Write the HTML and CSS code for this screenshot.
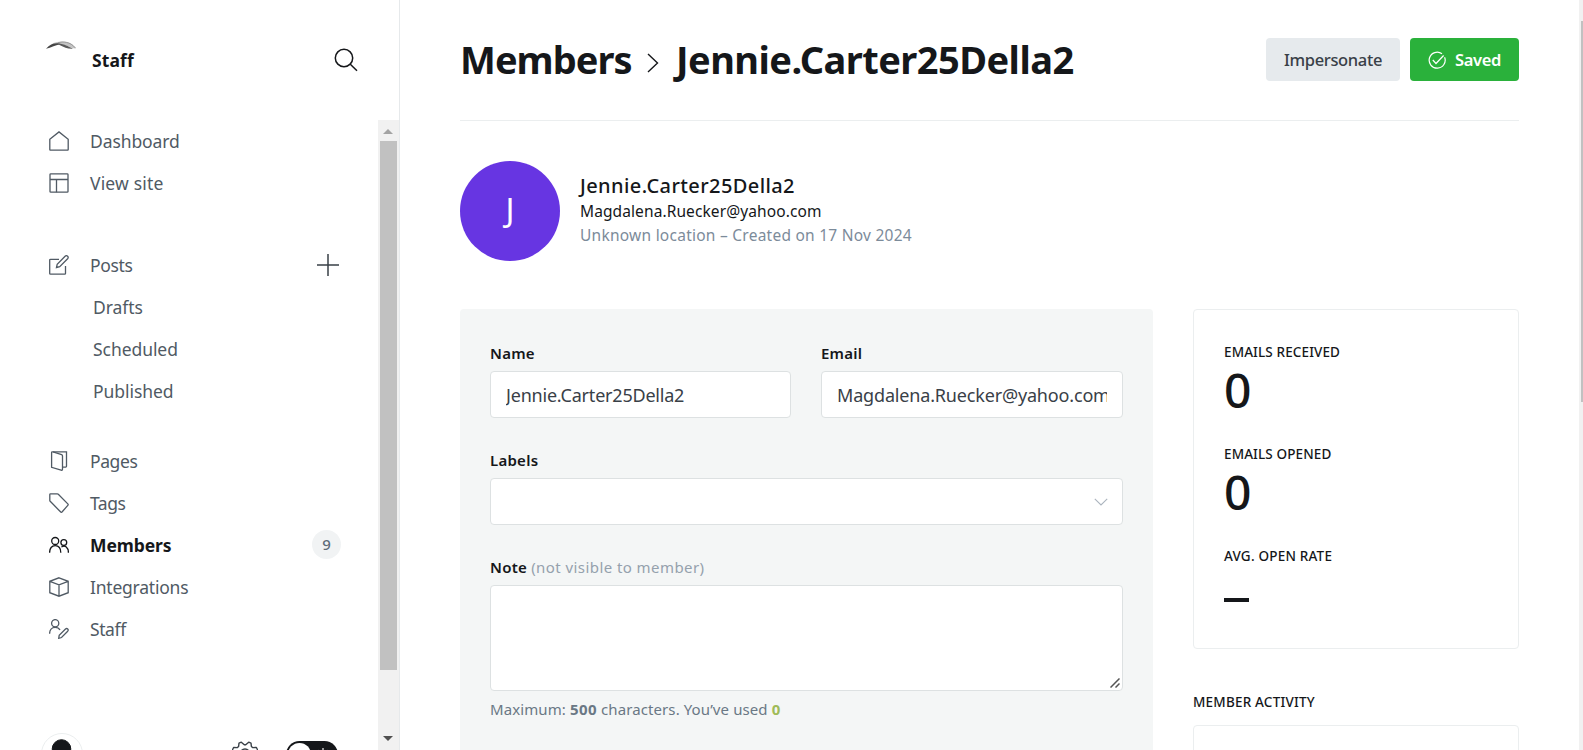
FILE: index.html
```
<!DOCTYPE html>
<html lang="en">
<head>
<meta charset="utf-8">
<title>Members - Jennie.Carter25Della2</title>
<link rel="stylesheet" href="styles.css">
</head>
<body>
<div class="app">
  <aside class="sidebar">
    <header class="side-head">
      <svg class="site-logo" viewBox="0 0 30 8"><path d="M6 2.600C11 .4 17 0 22 1.200c4 1.200 6 3.200 8 6.400-4-.3-7-1.400-10-3-4-1.800-8-2.400-14-2z" fill="#c4c4c4"/><path d="M0 7.800C5 2.200 10 1.200 15 3.200 10 3.600 5 6.800 0 7.800z" fill="#454545"/><path d="M11 2.200c7 .3 11 3.200 16 5.500-5 .4-9-1.400-13-3.500-1-.7-2-1.100-3-1.100z" fill="#5a5a5a"/><path d="M12 1.800C17 .2 24 .6 29.500 7" fill="none" stroke="#8d8d8d" stroke-width=".8"/></svg>
      <span class="site-name">Staff</span>
      <svg class="search" viewBox="0 0 24 24"><circle cx="10" cy="10" r="8.700"/><path d="M16.300 16.300 23 22.800"/></svg>
    </header>
    <div class="side-body">
      <nav class="nav">
        <a class="item"><svg class="ico" viewBox="0 0 20 20"><path d="M.8 8.200 10 .9l9.200 7.300v10.300a.7.7 0 0 1-.7.700h-17a.7.7 0 0 1-.7-.7z"/></svg><span class="t">Dashboard</span></a>
        <a class="item"><svg class="ico" viewBox="0 0 20 20"><rect x="1" y=".8" width="18" height="18.400" rx=".8"/><path d="M1 6.500h18M7.500 6.500v12.700"/></svg><span class="t wide">View site</span></a>
        <a class="item gap-a"><svg class="ico" viewBox="0 0 20 20"><path d="M10 4.300H1.500a.8.8 0 0 0-.8.800v13.300c0 .4.400.8.800.8h14.200c.4 0 .8-.4.800-.8V11"/><path d="m7.500 12.500.7-3.300 7.900-7.900c.8-.8 1.800-.7 2.500-.1.700.7.700 1.700 0 2.500l-7.900 7.900z"/></svg><span class="t tight">Posts</span><svg class="plus" viewBox="0 0 22 22"><path d="M11 0v22M0 11h22"/></svg></a>
        <a class="item sub"><span class="t">Drafts</span></a>
        <a class="item sub"><span class="t">Scheduled</span></a>
        <a class="item sub"><span class="t">Published</span></a>
        <a class="item gap-b"><svg class="ico" viewBox="0 0 20 20"><path d="M2.600 1.500v14.800l9.500 2.900c.8.2 1.400-.2 1.400-.9V4.900c0-.6-.3-1-.9-1.200L4 .9C3.200.7 2.600.9 2.600 1.500z"/><path d="M4 .8h13.500v14.500c0 .5-.3.800-.8.800h-3.200"/></svg><span class="t snug">Pages</span></a>
        <a class="item"><svg class="ico" viewBox="0 0 20 20"><path d="M.8 1.500c0-.4.300-.7.700-.7h6.800c.4 0 .7.100 1 .4l9.500 9.700c.5.500.5 1 0 1.500L13 19c-.4.400-.9.400-1.300 0L1.200 8.300c-.3-.3-.4-.5-.4-.9z"/></svg><span class="t snugger">Tags</span></a>
        <a class="item active"><svg class="ico" viewBox="0 0 20 20"><circle cx="6.200" cy="6" r="3.500"/><path d="M.6 17.800c0-4.600 2.100-7.200 5.600-7.200s5.600 2.600 5.600 7.200"/><circle cx="14.800" cy="7.600" r="2.900"/><path d="M12.400 12c3.700-2.300 7 .2 7 5.800"/></svg><span class="t">Members</span><span class="count">9</span></a>
        <a class="item"><svg class="ico" viewBox="0 0 20 20"><path d="m10 .8 9.200 3.500v11.400L10 19.200.8 15.700V4.300zM.8 4.300 10 7.900l9.200-3.600M10 7.900v11.300"/></svg><span class="t close">Integrations</span></a>
        <a class="item"><svg class="ico" viewBox="0 0 20 20"><circle cx="6.200" cy="4.200" r="3.600"/><path d="M.6 14.800C.6 10.900 2.700 8.300 6.200 8.300c2.200 0 3.900 1 4.800 2.700"/><path d="m9.700 19.300.5-3 6.300-6.300c.7-.6 1.600-.6 2.200 0 .6.600.6 1.500 0 2.200l-6.200 6.300z"/></svg><span class="t snug">Staff</span></a>
      </nav>
      <div class="vscroll"><i class="arrow up"></i><i class="thumb"></i><i class="arrow down"></i></div>
    </div>
    <footer class="side-foot">
      <span class="user"><svg viewBox="0 0 42 42"><circle cx="21" cy="21" r="20.500" fill="#fff" stroke="#ebeeef"/><circle cx="20.500" cy="16" r="9.300" fill="#15171a"/></svg></span>
      <svg class="gear" viewBox="0 0 26 26"><path d="M9.300 1.200 12.300 3.800h1.400L16.700 1.200 19 2.200l.4 3.300 1.200 1.100 3.800-.1 1.300 2.600-2.500 2.600v2.600l2.500 2.600-1.300 2.600-3.800-.1-1.200 1.100-.4 3.300-2.300 1-3-2.600h-1.400l-3 2.600-2.300-1-.4-3.300-1.200-1.100-3.800.1-1.300-2.600 2.500-2.600v-2.600L.3 9.100l1.300-2.600 3.800.1 1.200-1.100.4-3.300z"/><circle cx="13" cy="13" r="5"/></svg>
      <span class="toggle"><i class="knob"></i><svg viewBox="0 0 16 16"><circle cx="8" cy="8" r="3"/><path d="M8 0v3M8 13v3M0 8h3M13 8h3M2.500 2.500l2 2M11.500 11.500l2 2M2.500 13.500l2-2M11.500 4.500l2-2"/></svg></span>
    </footer>
  </aside>

  <main class="main">
    <header class="top">
      <h1 class="title"><span class="crumb">Members</span><svg class="chev" viewBox="0 0 12 20"><path d="m1 1 9.500 9L1 19"/></svg><span class="who">Jennie.Carter25Della2</span></h1>
      <div class="actions">
        <button class="btn">Impersonate</button>
        <button class="btn saved"><svg viewBox="0 0 18 18"><path d="M16.600 6.200A8 8 0 1 1 14 2.800"/><path d="m4.800 9 3.200 3.500 7.600-8"/></svg>Saved</button>
      </div>
    </header>
    <section class="profile">
      <div class="avatar">J</div>
      <div class="p-text">
        <h3 class="p-name">Jennie.Carter25Della2</h3>
        <p class="p-mail">Magdalena.Ruecker@yahoo.com</p>
        <p class="p-info">Unknown location – Created on 17 Nov 2024</p>
      </div>
    </section>
    <div class="cols">
      <form class="panel">
        <div class="pair">
          <label class="field">Name<input class="input name" value="Jennie.Carter25Della2"></label>
          <label class="field">Email<input class="input mail" value="Magdalena.Ruecker@yahoo.com"></label>
        </div>
        <div class="field">Labels<div class="input select"><svg viewBox="0 0 14 8"><path d="m.8.8 6.200 6.200 6.200-6.200"/></svg></div></div>
        <label class="field note"><span>Note <span class="hint">(not visible to member)</span></span><textarea class="input area"></textarea><svg class="grip" viewBox="0 0 10 10"><path d="M.5 9.500l9-9M5.500 9.500l4-4"/></svg></label>
        <p class="limit">Maximum: <b>500</b> characters. You’ve used <b class="ok">0</b></p>
      </form>
      <div class="right">
        <div class="card stats">
          <div><h6 class="cap">EMAILS RECEIVED</h6><div class="num">0</div></div>
          <div><h6 class="cap">EMAILS OPENED</h6><div class="num">0</div></div>
          <div><h6 class="cap rate">AVG. OPEN RATE</h6><div class="num dash"></div></div>
        </div>
        <h6 class="cap activity">MEMBER ACTIVITY</h6>
        <div class="card feed"></div>
      </div>
    </div>
  </main>
  <div class="page-scroll"><i></i></div>
</div>
</body>
</html>
```
FILE: styles.css
```
* { box-sizing: border-box; }
body {
  margin: 0;
  background: #fff;
  color: #15171a;
  font-family: "Noto Sans", "Open Sans", sans-serif;
  overflow: hidden;
}
h1, h3, h6, p { margin: 0; }
svg { fill: none; stroke: currentColor; flex: none; }
.app { display: flex; width: 1583px; height: 750px; overflow: hidden; }

/* Sidebar */
.sidebar {
  display: flex;
  flex-direction: column;
  flex: none;
  width: 400px;
  height: 750px;
  border-right: 1px solid #e6e9eb;
  overflow: hidden;
}
.side-head {
  display: flex;
  align-items: center;
  height: 120px;
  flex: none;
  padding: 0 41px 0 46px;
}
.site-logo { width: 30px; height: 8px; margin: -31px 16px 0 0; stroke: none; }
.site-name { flex: 1; font-size: 17.5px; font-weight: 700; letter-spacing: .12px; }
.search { width: 24px; height: 24px; stroke-width: 1.5; }
.side-body { display: flex; height: 630px; flex: none; }
.nav { width: 378px; padding: 0 37px 0 49px; color: #394047; }
.item {
  display: flex;
  align-items: center;
  height: 42px;
  font-size: 17.5px;
  letter-spacing: -.1px;
  color: #505a64;
}
.ico { width: 20px; height: 20px; margin-right: 21px; stroke-width: 1.3; }
.gap-a { margin-top: 40px; }
.gap-b { margin-top: 27.500px; }
.sub { padding-left: 44px; letter-spacing: -.06px; }
.t { flex: 1; }
.wide { letter-spacing: .18px; }
.tight { letter-spacing: -.34px; }
.snug { letter-spacing: -.4px; }
.snugger { letter-spacing: -.5px; }
.close { letter-spacing: -.22px; }
.plus { width: 22px; height: 22px; margin-right: 2px; color: #394047; stroke-width: 1.5; }
.active { color: #15171a; font-weight: 700; }
.count {
  width: 29px;
  height: 29px;
  border-radius: 50%;
  background: #f1f3f4;
  color: #5d6b78;
  font-size: 15px;
  font-weight: 500;
  line-height: 29px;
  text-align: center;
}
.vscroll { position: relative; width: 21px; height: 630px; background: #f1f1f1; }
.thumb { position: absolute; left: 2px; top: 21px; width: 17px; height: 529px; background: #c1c1c1; }
.arrow { position: absolute; left: 5px; border: 5px solid transparent; }
.up { top: 4px; border-bottom-color: #a3a3a3; }
.down { bottom: 4px; border-top-color: #505050; }
.side-foot {
  position: absolute;
  left: 0;
  top: 733px;
  width: 378px;
  height: 17px;
  display: flex;
  align-items: flex-start;
  padding-left: 41px;
  overflow: hidden;
}
.user, .user svg { display: block; width: 42px; height: 42px; }
.gear { width: 26px; height: 26px; margin: 8px 0 0 149px; color: #394047; stroke-width: 1.4; stroke-linejoin: round; }
.toggle {
  display: flex;
  align-items: center;
  gap: 5px;
  width: 52px;
  height: 27px;
  margin: 8px 0 0 28px;
  padding: 2px;
  border-radius: 14px;
  background: #15171a;
  color: #fff;
}
.toggle .knob { width: 23px; height: 23px; border-radius: 50%; background: #fff; }
.toggle svg { width: 14px; height: 14px; stroke-width: 1.3; }

/* Main column */
.main { width: 1179px; padding: 0 60px; flex: none; }
.top {
  display: flex;
  align-items: center;
  justify-content: space-between;
  height: 121px;
  padding-bottom: 1px;
  border-bottom: 1px solid #ebeeef;
}
.title { display: flex; align-items: center; padding-bottom: 2px; font-size: 38px; font-weight: 700; line-height: 48px; }
.crumb { letter-spacing: -.95px; width: 188px; }
.chev { width: 12px; height: 20px; margin: 8px 17px 0 -1px; stroke-width: 1.4; }
.who { letter-spacing: -.54px; }
.actions { display: flex; gap: 10px; }
.btn {
  width: 134px;
  height: 43px;
  padding: 0;
  border: 0;
  border-radius: 4px;
  background: #e6eaed;
  color: #394047;
  font: 500 16.5px "Noto Sans", sans-serif;
  letter-spacing: -.34px;
}
.saved {
  display: flex;
  align-items: center;
  justify-content: center;
  gap: 9px;
  width: 109px;
  background: #2ab13b;
  color: #fff;
  font-weight: 600;
}
.saved svg { width: 18px; height: 18px; stroke-width: 1.2; }
.profile { display: flex; gap: 20px; align-items: center; padding-top: 40px; }
.p-text { padding-bottom: 3px; }
.avatar {
  width: 100px;
  height: 100px;
  border-radius: 50%;
  background: #6735e2;
  color: #fff;
  font-size: 33px;
  line-height: 97px;
  text-align: center;
}
.p-name { font-size: 20px; font-weight: 500; line-height: 26px; letter-spacing: .4px; }
.p-mail { font-size: 15.500px; line-height: 24px; letter-spacing: .1px; }
.p-info { font-size: 15.500px; line-height: 24px; letter-spacing: .25px; color: #7c8b9a; }
.cols { display: flex; gap: 40px; margin-top: 48px; }
.panel { width: 693px; height: 480px; padding: 34px 30px 0; border-radius: 4px; background: #f4f6f6; }
.pair { display: grid; grid-template-columns: 301px 302px; gap: 30px; }
.field {
  display: block;
  height: 107px;
  font-size: 15px;
  font-weight: 600;
  line-height: 20px;
  letter-spacing: .25px;
}
.note { position: relative; }
.hint { font-weight: 400; letter-spacing: .43px; color: #95a1ad; }
.input {
  display: block;
  width: 100%;
  height: 47px;
  margin-top: 8px;
  padding: 0 15px;
  border: 1px solid #dde1e2;
  border-radius: 4px;
  background: #fff;
  color: #394047;
  font: 400 18px "Noto Sans", sans-serif;
  outline: 0;
}
.name { letter-spacing: -.21px; }
.mail { letter-spacing: -.17px; }
.select { display: flex; align-items: center; justify-content: flex-end; padding-right: 14px; color: #abb4be; }
.select svg { width: 14px; height: 8px; stroke-width: 1.1; }
.area { height: 106px; resize: none; }
.grip { position: absolute; right: 3px; top: 121px; width: 10px; height: 10px; color: #555; stroke-width: 1.5; }
.limit { margin-top: 35px; font-size: 15px; line-height: 20px; letter-spacing: .1px; color: #6a7885; }
.limit b { letter-spacing: .42px; }
.limit .ok { color: #9fbb58; }
.right { width: 326px; }
.card { border: 1px solid #ebeeef; border-radius: 4px; }
.stats { display: flex; flex-direction: column; height: 340px; padding: 32px 30px 0; }
.stats > div { height: 102.500px; }
.cap { font-size: 13.500px; font-weight: 500; line-height: 20px; letter-spacing: .12px; }
.rate, .activity { letter-spacing: .2px; }
.num { font-size: 48px; font-weight: 500; line-height: 56px; letter-spacing: -1px; }
.dash { width: 25px; height: 4px; margin-top: 32px; background: #15171a; }
.activity { margin: 43px 0 13px; }
.feed { height: 200px; }

/* Window scrollbar */
.page-scroll { flex: none; width: 4px; height: 750px; padding: 21px 0 0 2px; background: #f1f1f1; }
.page-scroll i { display: block; height: 381px; background: #c1c1c1; }
```
